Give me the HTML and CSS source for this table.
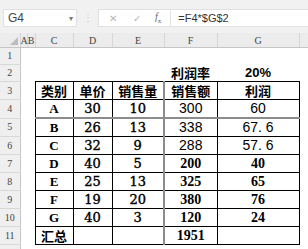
FILE: index.html
```html
<!DOCTYPE html>
<html>
<head>
<meta charset="utf-8">
<link rel="stylesheet" href="styles.css">
</head>
<body>
<div class="topbar">
  <div class="namebox"><span>G4</span><span class="caret">▾</span></div>
  <div class="dots">⋮</div>
  <div class="fbar">
    <span class="ico x">✕</span>
    <span class="ico ok">✓</span>
    <span class="ico fx"><i>f</i><sub>x</sub></span>
    <span class="fsep"></span>
    <span class="formula">=F4*$G$2</span>
  </div>
</div>
<table class="sheet">
  <colgroup>
    <col class="c-rh"><col class="c-a"><col class="c-b"><col class="c-c"><col class="c-d"><col class="c-e"><col class="c-f"><col class="c-g"><col>
  </colgroup>
  <tr class="hdr">
    <th class="corner"><span class="tri"></span></th><th>A</th><th>B</th><th>C</th><th>D</th><th>E</th><th>F</th><th>G</th><th class="last"></th>
  </tr>
  <tr class="r1"><th class="rh">1</th><td></td><td></td><td></td><td></td><td></td><td></td><td></td><td></td></tr>
  <tr class="r1"><th class="rh">2</th><td></td><td></td><td></td><td></td><td></td><td class="zh">利润率</td><td class="pct">20%</td><td></td></tr>
  <tr class="rr"><th class="rh">3</th><td></td><td></td><td class="b zh">类别</td><td class="b zh">单价</td><td class="b zh">销售量</td><td class="b zh fl">销售额</td><td class="b zh">利润</td><td></td></tr>
  <tr class="rr sel"><th class="rh">4</th><td></td><td></td><td class="b lt">A</td><td class="b wd">30</td><td class="b wd">10</td><td class="b sn fl">300</td><td class="b sn">60</td><td></td></tr>
  <tr class="rr"><th class="rh">5</th><td></td><td></td><td class="b lt">B</td><td class="b wd">26</td><td class="b wd">13</td><td class="b sn fl">338</td><td class="b sn">67. 6</td><td></td></tr>
  <tr class="rr"><th class="rh">6</th><td></td><td></td><td class="b lt">C</td><td class="b wd">32</td><td class="b wd">9</td><td class="b sn fl">288</td><td class="b sn">57. 6</td><td></td></tr>
  <tr class="rr"><th class="rh">7</th><td></td><td></td><td class="b lt">D</td><td class="b wd">40</td><td class="b wd">5</td><td class="b sf fl">200</td><td class="b sf">40</td><td></td></tr>
  <tr class="rr"><th class="rh">8</th><td></td><td></td><td class="b lt">E</td><td class="b wd">25</td><td class="b wd">13</td><td class="b sf fl">325</td><td class="b sf">65</td><td></td></tr>
  <tr class="rr"><th class="rh">9</th><td></td><td></td><td class="b lt">F</td><td class="b wd">19</td><td class="b wd">20</td><td class="b sf fl">380</td><td class="b sf">76</td><td></td></tr>
  <tr class="rr"><th class="rh">10</th><td></td><td></td><td class="b lt">G</td><td class="b wd">40</td><td class="b wd">3</td><td class="b sf fl">120</td><td class="b sf">24</td><td></td></tr>
  <tr class="rr"><th class="rh">11</th><td></td><td></td><td class="b zh">汇总</td><td class="b"></td><td class="b"></td><td class="b sf fl">1951</td><td class="b"></td><td></td></tr>
  <tr class="tail"><th class="rh"></th><td></td><td></td><td></td><td></td><td></td><td></td><td></td><td></td></tr>
</table>
</body>
</html>
```

FILE: styles.css
```css
html, body {
  margin: 0;
  padding: 0;
  background: #ffffff;
  width: 308px;
  height: 249px;
  overflow: hidden;
}

.topbar {
  height: 33px;
  background: #f1f1f1;
  display: flex;
  align-items: flex-start;
  padding-top: 9px;
  box-sizing: border-box;
  font-family: "Liberation Sans", Arial, sans-serif;
}

.namebox {
  margin-left: 3px;
  width: 74px;
  height: 18px;
  background: #ffffff;
  border: 1px solid #e0e0e0;
  box-sizing: border-box;
  display: flex;
  align-items: center;
  justify-content: space-between;
  padding: 0 3px 0 4px;
  font-size: 12px;
  color: #444;
}

.caret {
  font-size: 8px;
  color: #777;
}

.dots {
  width: 21px;
  text-align: center;
  color: #c8c8c8;
  font-size: 10px;
  line-height: 18px;
}

.fbar {
  flex: 1;
  height: 18px;
  background: #ffffff;
  border: 1px solid #e0e0e0;
  border-right: none;
  box-sizing: border-box;
  display: flex;
  align-items: center;
}

.ico {
  color: #b5b5b5;
  font-size: 10px;
}

.x { margin-left: 10px; }
.ok { margin-left: 16px; }
.fx {
  margin-left: 14px;
  color: #666;
  font-family: "Liberation Serif", serif;
  font-size: 10px;
}
.fx sub { font-size: 7px; }

.fsep {
  width: 1px;
  height: 16px;
  background: #e2e2e2;
  margin-left: 9px;
}

.formula {
  margin-left: 7px;
  font-size: 11px;
  color: #333;
}

.sheet {
  border-collapse: collapse;
  table-layout: fixed;
  width: 308px;
}

.c-rh { width: 20px; }
.c-a { width: 7px; }
.c-b { width: 8px; }
.c-c { width: 38px; }
.c-d { width: 39px; }
.c-e { width: 52px; }
.c-f { width: 53px; }
.c-g { width: 82px; }

td, th {
  padding: 0;
  white-space: nowrap;
  text-align: center;
}

.hdr th {
  height: 14px;
  background: #ececec;
  border-bottom: 1px solid #c6c6c6;
  border-right: 1px solid #d6d6d6;
  font-family: "Liberation Serif", serif;
  font-weight: normal;
  font-size: 10px;
  color: #444;
  line-height: 13px;
}

.hdr th.last { border-right: none; }

.corner { position: relative; }

.tri {
  position: absolute;
  right: 2px;
  bottom: 2px;
  width: 0;
  height: 0;
  border-left: 8px solid transparent;
  border-bottom: 8px solid #bdbdbd;
}

th.rh {
  background: #efefef;
  border-right: 1px solid #c6c6c6;
  border-bottom: 1px solid #d8d8d8;
  font-family: "Liberation Serif", serif;
  font-weight: normal;
  font-size: 10px;
  color: #444;
  line-height: 12px;
}

.r1 td, .r1 th { height: 16px; }
.rr td, .rr th { height: 17px; }
.tail td, .tail th { height: 6px; }

td.b {
  border: 1px solid #000;
}

td.fl {
  border-left: 2px solid #8c8c8c;
}

.sel td.b {
  border-bottom: 2px solid #8c8c8c;
}

.zh {
  font-family: "Noto Sans CJK SC", sans-serif;
  font-weight: bold;
  font-size: 13px;
  line-height: 15px;
  color: #000;
}

.pct {
  font-family: "Liberation Sans", Arial, sans-serif;
  font-weight: bold;
  font-size: 13px;
  line-height: 15px;
}

.lt {
  font-family: "Liberation Serif", serif;
  font-weight: bold;
  font-size: 13px;
  line-height: 15px;
}

.wd {
  font-family: "DejaVu Serif", serif;
  font-size: 13px;
  line-height: 15px;
  -webkit-text-stroke: 0.4px #000;
}

.sn {
  font-family: "Liberation Sans", Arial, sans-serif;
  font-size: 14px;
  line-height: 15px;
}

.sf {
  font-family: "Liberation Serif", serif;
  font-weight: bold;
  font-size: 14px;
  line-height: 15px;
}
```
